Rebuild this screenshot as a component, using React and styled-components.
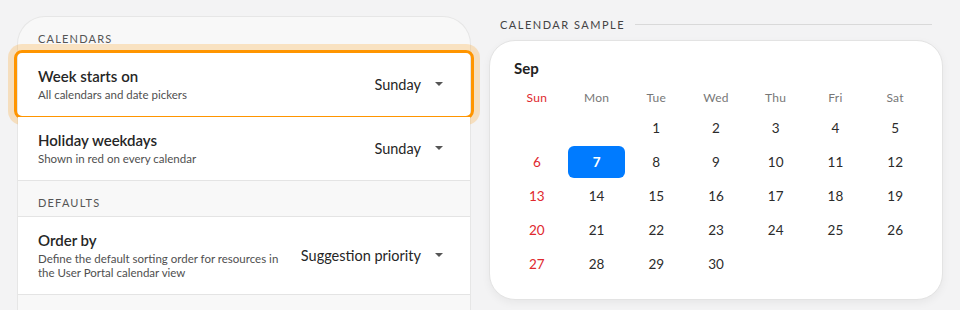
import React from "react";
import styled, { createGlobalStyle } from "styled-components";

const GlobalStyle = createGlobalStyle`
  body {
    margin: 0;
    background: #f3f3f4;
    font-family: "Lato", "Noto Sans", sans-serif;
    color: #2b2b2b;
  }
`;

const settings = [
  {
    section: "Calendars",
    rows: [
      { title: "Week starts on", hint: "All calendars and date pickers", value: "Sunday", focused: true },
      { title: "Holiday weekdays", hint: "Shown in red on every calendar", value: "Sunday" },
    ],
  },
  {
    section: "Defaults",
    rows: [
      {
        title: "Order by",
        hint: "Define the default sorting order for resources in the User Portal calendar view",
        value: "Suggestion priority",
      },
    ],
  },
];

const weekdays = ["Sun", "Mon", "Tue", "Wed", "Thu", "Fri", "Sat"];

function buildDays() {
  const cells = [null, null];
  for (let d = 1; d <= 30; d++) cells.push(d);
  return cells;
}

function App() {
  const days = buildDays();

  return (
    <>
      <GlobalStyle />
      <Page>
        <Panel>
          {settings.map((group) => (
            <React.Fragment key={group.section}>
              <SectionHeader>{group.section}</SectionHeader>
              {group.rows.map((row) => (
                <Row key={row.title} $focused={row.focused}>
                  <RowText>
                    <RowTitle>{row.title}</RowTitle>
                    <RowHint>{row.hint}</RowHint>
                  </RowText>
                  <Select>
                    <span>{row.value}</span>
                    <Caret />
                  </Select>
                </Row>
              ))}
            </React.Fragment>
          ))}
        </Panel>

        <Side>
          <SideHeader>
            <span>Calendar sample</span>
            <Rule />
          </SideHeader>
          <Card>
            <Month>Sep</Month>
            <Grid>
              {weekdays.map((w, i) => (
                <DayName key={w} $holiday={i === 0}>
                  {w}
                </DayName>
              ))}
              {days.map((d, i) => (
                <Day key={i} $holiday={i % 7 === 0} $selected={d === 7}>
                  {d}
                </Day>
              ))}
            </Grid>
          </Card>
        </Side>
      </Page>
    </>
  );
}

export default App;

const Page = styled.div`
  display: grid;
  grid-template-columns: 454px 454px;
  column-gap: 18px;
  padding: 16px 17px 0;
  height: 310px;
  box-sizing: border-box;
  overflow: hidden;
`;

const Panel = styled.section`
  background: #f8f8f8;
  border: 1px solid #e6e6e6;
  border-bottom: none;
  border-radius: 28px 28px 0 0;
  height: 320px;
  box-sizing: border-box;
`;

const SectionHeader = styled.div`
  height: 36px;
  box-sizing: border-box;
  padding: 14px 20px 6px;
  font-size: 11px;
  line-height: 16px;
  letter-spacing: 1.2px;
  text-transform: uppercase;
  color: #555;
  border-bottom: 1px solid #e4e4e4;
`;

const Row = styled.div`
  position: relative;
  display: flex;
  align-items: center;
  min-height: 64px;
  box-sizing: border-box;
  padding: 13px 27px 14px 20px;
  background: #fff;
  border-bottom: 1px solid #e4e4e4;

  &::after {
    content: "";
    display: ${(p) => (p.$focused ? "block" : "none")};
    position: absolute;
    inset: -3px -4px -3px -4px;
    border: 3px solid #ff9500;
    border-radius: 8px;
    box-shadow: 0 0 0 6px rgba(255, 149, 0, 0.22);
    pointer-events: none;
  }
`;

const RowText = styled.div`
  flex: 1;
  max-width: 246px;
`;

const RowTitle = styled.div`
  font-size: 15px;
  line-height: 20px;
  font-weight: 600;
  color: #262626;
`;

const RowHint = styled.div`
  margin-top: 2px;
  font-size: 11.5px;
  line-height: 14px;
  color: #4f4f4f;
`;

const Select = styled.div`
  margin-left: auto;
  display: flex;
  align-items: center;
  gap: 14px;
  font-size: 14.5px;
  color: #262626;
`;

const Caret = styled.span`
  width: 0;
  height: 0;
  border-left: 4px solid transparent;
  border-right: 4px solid transparent;
  border-top: 4px solid #555;
`;

const Side = styled.section`
  display: flex;
  flex-direction: column;
`;

const SideHeader = styled.div`
  display: flex;
  align-items: center;
  gap: 10px;
  height: 16px;
  padding-left: 11px;
  margin-bottom: 8px;
  font-size: 11px;
  letter-spacing: 1.5px;
  text-transform: uppercase;
  color: #444;
`;

const Rule = styled.div`
  flex: 1;
  height: 1px;
  background: #d9d9d9;
  margin-right: 11px;
`;

const Card = styled.div`
  background: #fff;
  border: 1px solid #e3e3e3;
  border-radius: 26px;
  box-shadow: 0 3px 8px rgba(0, 0, 0, 0.05);
  padding: 18px 18px 20px;
  height: 260px;
  box-sizing: border-box;
`;

const Month = styled.div`
  margin-left: 6px;
  font-size: 15px;
  line-height: 18px;
  font-weight: 700;
  color: #222;
  margin-bottom: 7px;
`;

const Grid = styled.div`
  display: grid;
  grid-template-columns: repeat(7, 1fr);
  column-gap: 2px;
  row-gap: 2px;
  grid-auto-rows: 32px;
  grid-template-rows: 26px;
`;

const DayName = styled.div`
  display: flex;
  align-items: center;
  justify-content: center;
  font-size: 12px;
  letter-spacing: 0.3px;
  color: ${(p) => (p.$holiday ? "#e0282e" : "#777")};
`;

const Day = styled.div`
  display: flex;
  align-items: center;
  justify-content: center;
  font-size: 13.5px;
  border-radius: 6px;
  font-weight: ${(p) => (p.$selected ? 700 : 400)};
  background: ${(p) => (p.$selected ? "#007bff" : "transparent")};
  color: ${(p) => (p.$selected ? "#fff" : p.$holiday ? "#e0282e" : "#2b2b2b")};
`;
